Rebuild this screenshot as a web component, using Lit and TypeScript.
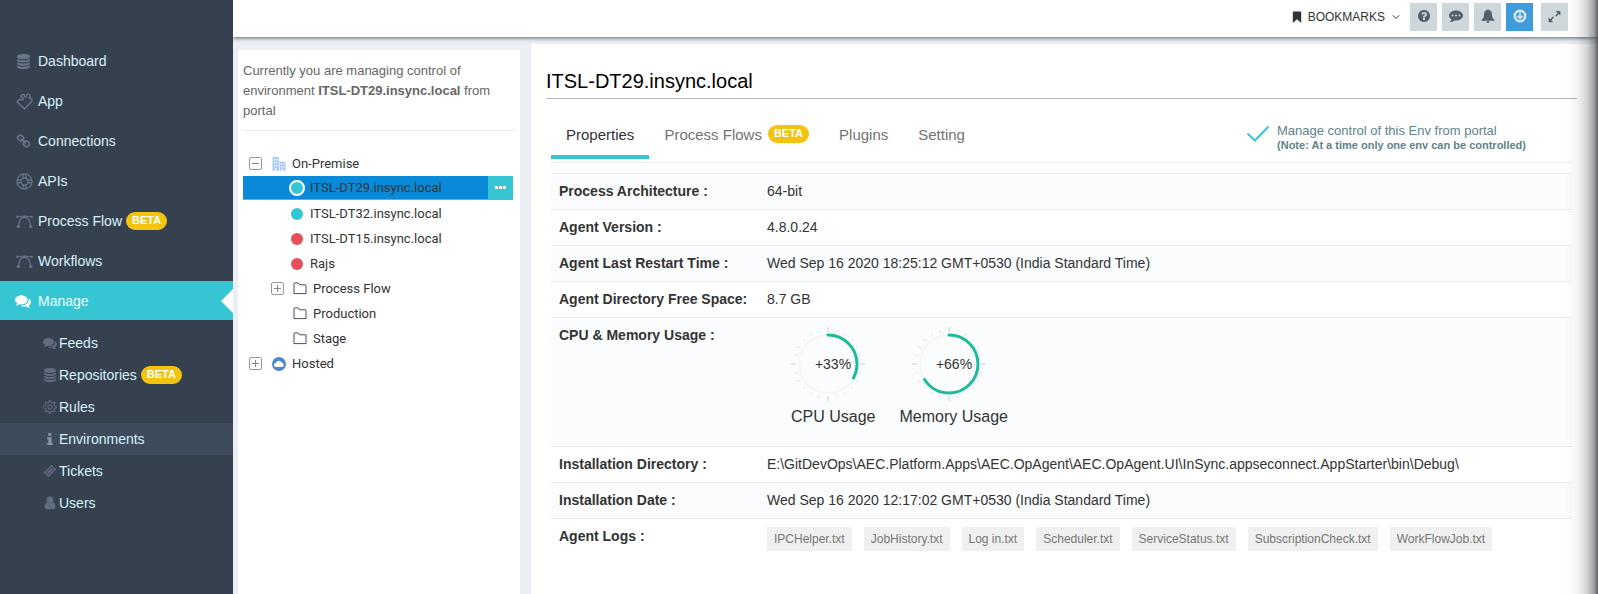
import { LitElement, html, svg, css, nothing } from "lit";
import { customElement, property, state } from "lit/decorators.js";
import { classMap } from "lit/directives/class-map.js";

const DATABASE = svg`<path d="M896 768q237 0 443-43t325-127v170q0 69-103 128t-280 93.500-385 34.500-385-34.500-280-93.500-103-128v-170q119 84 325 127t443 43zm0 768q237 0 443-43t325-127v170q0 69-103 128t-280 93.500-385 34.500-385-34.500-280-93.500-103-128v-170q119 84 325 127t443 43zm0-384q237 0 443-43t325-127v170q0 69-103 128t-280 93.500-385 34.500-385-34.500-280-93.500-103-128v-170q119 84 325 127t443 43zm0-1152q208 0 385 34.500t280 93.500 103 128v128q0 69-103 128t-280 93.500-385 34.500-385-34.500-280-93.500-103-128v-128q0-69 103-128t280-93.500 385-34.500z"/>`;
const COMMENTS = svg`<path d="M1408 768q0 139-94 257t-256.500 186.500-353.500 68.500q-86 0-176-16-124 88-278 128-36 9-86 16h-3q-11 0-20.500-8t-11.500-21q-1-3-1-6.500t.5-6.500 2-6l2.500-5 3.500-5.500 4-5 4.500-5 4-4.500q5-6 23-25t26-29.500 22.500-29 25-38.500 20.500-44q-124-72-195-177t-71-224q0-139 94-257t256.500-186.500 353.500-68.500 353.500 68.500 256.500 186.500 94 257zm384 256q0 120-71 224.500t-195 176.500q10 24 20.500 44t25 38.500 22.500 29 26 29.500 23 25q1 1 4 4.500t4.500 5 4 5 3.500 5.500l2.500 5 2 6 .5 6.500-1 6.500q-3 14-13 22t-22 7q-50-7-86-16-154-40-278-128-90 16-176 16-271 0-472-132 58 4 88 4 161 0 309-45t264-129q125-92 192-212t67-254q0-77-23-152 129 71 204 178t75 230z"/>`;
const CHAIN = svg`<path d="M1520 1216q0-40-28-68l-208-208q-28-28-68-28-42 0-72 32 3 3 19 18.500t21.500 21.500 15 19 13 25.500 3.500 27.500q0 40-28 68t-68 28q-15 0-27.500-3.500t-25.500-13-19-15-21.500-21.500-18.500-19q-33 31-33 73 0 40 28 68l206 207q27 27 68 27 40 0 68-26l147-146q28-28 28-67zm-703-705q0-40-28-68l-206-207q-28-28-68-28-39 0-68 27l-147 146q-28 28-28 67 0 40 28 68l208 208q27 27 68 27 42 0 72-31-3-3-19-18.500t-21.500-21.500-15-19-13-25.500-3.500-27.500q0-40 28-68t68-28q15 0 27.500 3.500t25.500 13 19 15 21.500 21.500 18.500 19q33-31 33-73zm895 705q0 120-85 203l-147 146q-83 83-203 83-121 0-204-85l-206-207q-83-83-83-203 0-123 88-209l-88-88q-86 88-208 88-120 0-204-84l-208-208q-84-84-84-204t85-203l147-146q83-83 203-83 121 0 204 85l206 207q83 83 83 203 0 123-88 209l88 88q86-88 208-88 120 0 204 84l208 208q84 84 84 204z"/>`;
const QUESTION = svg`<path d="M1024 1376v-192q0-14-9-23t-23-9h-192q-14 0-23 9t-9 23v192q0 14 9 23t23 9h192q14 0 23-9t9-23zm256-672q0-88-55.500-163t-138.500-116-170-41q-243 0-371 213-15 24 8 42l132 100q7 6 19 6 16 0 25-12 53-68 86-92 34-24 86-24 48 0 85.500 26t37.500 59q0 38-20 61t-68 45q-63 28-115.500 86.500t-52.500 125.500v36q0 14 9 23t23 9h192q14 0 23-9t9-23q0-19 21.500-49.500t54.500-49.500q32-18 49-28.500t46-35 44.500-48 28-60.500 12.500-81zm384 192q0 209-103 385.500t-279.500 279.500-385.500 103-385.500-103-279.500-279.500-103-385.500 103-385.500 279.500-279.500 385.500-103 385.500 103 279.500 279.500 103 385.500z"/>`;

type Glyph = { box: string; art: unknown };

const line = (art: unknown, weight = 1.3) => svg`<g fill="none" stroke="currentColor" stroke-width=${weight} stroke-linejoin="round" stroke-linecap="round">${art}</g>`;

const GLYPHS: Record<string, Glyph> = {
  database: { box: "0 0 1792 1792", art: DATABASE },
  comments: { box: "0 0 1792 1792", art: COMMENTS },
  chain: { box: "0 0 1792 1792", art: CHAIN },
  question: { box: "0 0 1792 1792", art: QUESTION },
  puzzle: {
    box: "0 0 18 18",
    art: line(svg`<path d="M1 9.200 4.200 6.400C5 8 7.800 7.600 7.600 5.500 7.500 4.200 6.300 3.900 5.600 4.300L5 3.200C6.300 1 8.900 1.200 9.200 3.300 9.500 4.800 10.900 4.600 10.900 3.300 11 1.200 13.300.6 14.500 2 15.400 3.200 14.900 4.800 13.800 5.300 15 5 17 5.700 17 7.500 17 8.600 16.500 9.100 15.900 9.600L9 17Z"/>`, 1.5),
  },
  support: {
    box: "0 0 18 18",
    art: line(svg`<circle cx="9" cy="9" r="8"/><circle cx="9" cy="9" r="3.800"/><path d="M7.500 1.500v4M10.500 1.500v4M7.500 12.500v4M10.500 12.500v4M1.500 7.500h4M1.500 10.500h4M12.500 7.500h4M12.500 10.500h4"/>`),
  },
  vector: {
    box: "0 0 18 18",
    art: svg`${line(svg`<path d="M1 4h16M2.700 14C2.900 8.500 5.400 5 9 4.200c3.600.8 6.100 4.300 6.300 9.800"/>`, 1.2)}<path d="M.3 3h2v2h-2zM15.700 3h2v2h-2zM7.600 2.600h2.800v2.800H7.600zM.8 13h3.200v2.600H.8zM14 13h3.200v2.600H14z"/>`,
  },
  gear: {
    box: "0 0 18 18",
    art: line(svg`<circle cx="9" cy="9" r="2.700"/><path d="M7.500 3.200 7.800 1h2.400l.3 2.200 1.600.7 1.800-1.400 1.600 1.600L14.100 5.900l.7 1.600 2.200.3v2.400l-2.200.3-.7 1.600 1.400 1.800-1.600 1.600-1.800-1.400-1.600.7-.3 2.200H7.800l-.3-2.200-1.600-.7-1.800 1.400-1.600-1.600 1.400-1.800-.7-1.600L1 10.200V7.800l2.200-.3.7-1.600L2.500 4.100l1.600-1.600 1.800 1.400Z"/>`),
  },
  info: { box: "0 0 14 14", art: svg`<path d="M5.200 1h3.200v2.700H5.200zM4.200 5.200h4.300v5.600h1.200V13H4.200v-2.200h1.200V7.300H4.200z"/>` },
  ticket: {
    box: "0 0 14 14",
    art: svg`<path fill-rule="evenodd" d="M8.700.7 10.200 2.200a1.200 1.200 0 0 0 1.600 1.600l1.500 1.500-8 8-1.500-1.500a1.200 1.200 0 0 0-1.600-1.600L.7 8.700ZM8.500 3 3 8.500 5.500 11 11 5.500ZM8.500 4.100 9.900 5.500 5.500 9.900 4.100 8.500Z"/>`,
  },
  user: { box: "0 0 14 14", art: svg`<circle cx="7" cy="4" r="3.400"/><path d="M4.200 6.300a4.200 4.200 0 0 0 5.600 0C11.600 6.700 12.300 8.500 12.300 11c0 1.400-.7 2.200-1.700 2.200H3.400c-1 0-1.700-.8-1.700-2.200 0-2.500.7-4.300 2.500-4.700Z"/>` },
  commenting: {
    box: "0 0 14 14",
    art: svg`<path fill-rule="evenodd" d="M7 1.500c3.800 0 7 2.200 7 5s-3.200 5-7 5c-.6 0-1.200 0-1.700-.1C4 12.500 2.500 13 1 13c.8-.8 1.300-1.600 1.500-2.700C1 9.400 0 8 0 6.500c0-2.800 3.200-5 7-5ZM3.500 5.500a1 1 0 1 0 0 2 1 1 0 0 0 0-2Zm3.500 0a1 1 0 1 0 0 2 1 1 0 0 0 0-2Zm3.500 0a1 1 0 1 0 0 2 1 1 0 0 0 0-2Z"/>`,
  },
  bell: { box: "0 0 14 14", art: svg`<path d="M6.200 1a.8.8 0 0 1 1.600 0C10 1.400 11 3.200 11 5.200c0 3 .9 4.600 2.500 5.800v.8H.500V11C2.100 9.800 3 8.200 3 5.200 3 3.200 4 1.400 6.200 1ZM5.400 12.300h3.200a1.600 1.600 0 0 1-3.200 0Z"/>` },
  down: { box: "0 0 14 14", art: svg`<circle cx="7" cy="7" r="5.300" fill="none" stroke="currentColor" stroke-width="2.200"/><path fill="none" stroke="currentColor" stroke-width="1.500" d="M7 3.200v6M4.200 6.700 7 9.500 9.800 6.700"/>` },
  expand: {
    box: "0 0 14 14",
    art: svg`<path d="M8.300 1h5v5l-1.700-1.700-2.900 2.900-1.100-1.100 2.800-3ZM5.700 13.200H.7v-5l1.700 1.700 2.900-2.900 1.100 1.100-2.800 3Z"/>`,
  },
  bookmark: { box: "0 0 10 12", art: svg`<path d="M.8.500h8.400V12L5 8.200.8 12Z"/>` },
  chevron: { box: "0 0 8 8", art: svg`<path fill="none" stroke="currentColor" d="m.8 2.300 3.200 3.200 3.200-3.200"/>` },
  check: { box: "0 0 24 18", art: svg`<path fill="none" stroke="currentColor" stroke-width="2" d="M1.500 8.500 9 15.500 22.500 1.500"/>` },
  building: {
    box: "0 0 14 14",
    art: svg`<path fill="#a9c8fb" d="M.5 0h6.300v4.800h6.700v9H.500Z"/><path fill="#fff" d="M2 2h1.300v1.500H2zM4.300 2h1.300v1.500H4.300zM2 5h1.300v1.500H2zM4.300 5h1.300v1.500H4.300zM2 8h1.300v1.500H2zM4.300 8h1.300v1.500H4.300zM7 5.500h.8v8.300H7zM8.900 6.500h1.300v1.300H8.900zM11.200 6.500h1.300v1.300h-1.300zM8.900 9.200h1.300v1.300H8.900zM11.200 9.200h1.300v1.300h-1.300zM2.800 11.300h1.700v2.500H2.800zM9.600 11.700h1.700v2.100H9.600z"/>`,
  },
  cloud: { box: "0 0 14 14", art: svg`<circle cx="7" cy="7" r="7" fill="#4e87cb"/><path fill="#fff" d="M4.200 10a2 2 0 0 1-.3-4 3 3 0 0 1 5.600-.4 2.300 2.300 0 0 1 .8 4.400Z"/>` },
  folder: { box: "0 0 14 14", art: svg`<path fill="none" stroke="#4a3a52" d="M.5 12.500v-11q0-.5.500-.5h4.200l1.300 2h6.500q.5 0 .5.500v9Z"/>` },
  plus: { box: "0 0 13 13", art: svg`<rect x=".5" y=".5" width="12" height="12" rx="1.500" fill="none" stroke="#999"/><path stroke="#888" d="M3 6.500h7M6.500 3v7"/>` },
  minus: { box: "0 0 13 13", art: svg`<rect x=".5" y=".5" width="12" height="12" rx="1.500" fill="none" stroke="#999"/><path stroke="#888" d="M3 6.500h7"/>` },
};

const icon = (name: string, width: number, height = width) => svg`
  <svg width=${width} height=${height} viewBox=${GLYPHS[name].box} fill="currentColor" aria-hidden="true">${GLYPHS[name].art}</svg>`;

const reset = css`
  *, *::before, *::after { box-sizing: border-box; }
  svg { display: block; flex: none; }
  ul { list-style: none; margin: 0; padding: 0; }
  button { font: inherit; color: inherit; background: none; border: 0; padding: 0; margin: 0; text-align: left; cursor: pointer; }
  a { color: inherit; text-decoration: none; }
`;

@customElement("beta-badge")
class BetaBadge extends LitElement {
  static styles = css`
    :host {
      display: inline-block; height: 18px; padding: 0 6px; border-radius: 9px;
      background: #f2c40f; color: #fff; font-size: 11px; font-weight: 700; line-height: 17px;
    }
  `;
  render() { return html`BETA`; }
}

@customElement("side-nav")
class SideNav extends LitElement {
  static styles = [reset, css`
    :host { display: block; padding-top: 41px; background: #364150; color: #d8f0fa; font-size: 14px; }
    .link { display: flex; align-items: center; height: 40px; padding-left: 16px; color: #d8f0fa; }
    .glyph { width: 22px; color: #68758a; }
    .label { margin-right: 4px; }
    .active { position: relative; height: 39px; padding-left: 15px; background: #36c6d3; color: #f4fdfe; }
    .active .glyph { width: 23px; color: #fff; }
    .active::after {
      content: ""; position: absolute; right: 0; top: 8px;
      border: 12px solid transparent; border-left: 0; border-right-color: #fff;
    }
    .sub { padding: 7px 0; }
    .child { display: flex; align-items: center; height: 32px; padding-left: 43px; }
    .child .glyph { width: 16px; color: #606c80; }
    .current { background: #3e4b5c; }
    .current .glyph { color: #8a96a8; }
  `];

  private items = [
    ["database", "Dashboard"], ["puzzle", "App"], ["chain", "Connections"],
    ["support", "APIs"], ["vector", "Process Flow", "beta"], ["vector", "Workflows"],
  ];
  private children_ = [
    ["comments", "Feeds"], ["database", "Repositories", "beta"], ["gear", "Rules"],
    ["info", "Environments"], ["ticket", "Tickets"], ["user", "Users"],
  ];

  render() {
    return html`
      <nav aria-label="Main">
        <ul>
          ${this.items.map(([glyph, label, beta]) => html`
            <li><a class="link" href="#">
              <span class="glyph">${icon(glyph, glyph === "database" || glyph === "chain" ? 15 : 17)}</span>
              <span class="label">${label}</span>${beta ? html`<beta-badge></beta-badge>` : nothing}
            </a></li>`)}
          <li>
            <a class="link active" href="#"><span class="glyph">${icon("comments", 16)}</span><span class="label">Manage</span></a>
            <ul class="sub">
              ${this.children_.map(([glyph, label, beta]) => html`
                <li><a class=${classMap({ child: true, current: label === "Environments" })} href="#">
                  <span class="glyph">${icon(glyph, 14)}</span>
                  <span class="label">${label}</span>${beta ? html`<beta-badge></beta-badge>` : nothing}
                </a></li>`)}
            </ul>
          </li>
        </ul>
      </nav>`;
  }
}

@customElement("top-bar")
class TopBar extends LitElement {
  static styles = [reset, css`
    :host {
      display: flex; justify-content: flex-end; align-items: flex-start; gap: 5px;
      height: 37px; padding: 3px 30px 0 0; background: #fff; position: relative;
      box-shadow: 0 1px 4px rgba(50, 55, 60, 0.8);
    }
    .bookmarks { display: flex; align-items: center; height: 28px; margin-right: 5px; font-size: 12px; color: #333; }
    .word { margin: 0 7px 0 6px; }
    .tool { display: grid; place-items: center; width: 27px; height: 28px; padding-bottom: 2px; background: #ced8da; color: #525e6b; }
    .primary { background: #3f9cdc; color: #e6ecf0; }
    .screen { margin-left: 3px; }
  `];
  render() {
    return html`
      <button class="bookmarks">${icon("bookmark", 10, 12)}<span class="word">BOOKMARKS</span>${icon("chevron", 8)}</button>
      <button class="tool" aria-label="Help">${icon("question", 14)}</button>
      <button class="tool" aria-label="Messages">${icon("commenting", 14)}</button>
      <button class="tool" aria-label="Notifications">${icon("bell", 14)}</button>
      <button class="tool primary" aria-label="Downloads">${icon("down", 14)}</button>
      <button class="tool screen" aria-label="Full screen">${icon("expand", 13)}</button>`;
  }
}

@customElement("env-tree")
class EnvTree extends LitElement {
  static styles = [reset, css`
    :host { display: block; background: #fff; padding: 11px 5px 0; }
    .note { margin: 0; padding-bottom: 9px; border-bottom: 1px solid #e9ecef; font-size: 13px; line-height: 20px; color: #666; }
    .tree { padding: 20px 2px 0 0; font-family: Roboto, sans-serif; font-size: 13px; color: #333; }
    .row { display: flex; align-items: center; height: 25px; }
    .toggle { display: grid; place-items: center; width: 24px; height: 25px; }
    .name { display: flex; align-items: center; flex: 1; height: 25px; gap: 6px; }
    .root .name { padding-left: 5px; }
    .leaf { padding-left: 48px; }
    .leaf .name { gap: 7px; }
    .nested { padding-left: 22px; }
    .nested .name { padding-left: 4px; }
    .blank { padding-left: 50px; }
    .dot { width: 12px; height: 12px; border-radius: 50%; }
    .up { background: #36c6d3; }
    .down { background: #e7505a; }
    .selected { height: 24px; margin-bottom: 1px; padding-left: 46px; background: #098ad8; border-bottom: 1px solid #36c6d3; }
    .selected .name { gap: 5px; height: 23px; }
    .selected .dot { width: 16px; height: 16px; border: 2px solid #fff; }
    .more { display: flex; align-items: center; justify-content: center; gap: 1px; width: 25px; height: 24px; background: #36c6d3; }
    .pip { width: 3px; height: 3px; background: #fff; }
  `];

  private toggle(glyph: string, label: string) {
    return html`<button class="toggle" aria-label=${label}>${icon(glyph, 13)}</button>`;
  }
  private server(name: string, status: string) {
    return html`<li class="row leaf"><button class="name"><span class="dot ${status}"></span>${name}</button></li>`;
  }

  render() {
    return html`
      <p class="note">Currently you are managing control of environment <b>ITSL-DT29.insync.local</b> from portal</p>
      <ul class="tree">
        <li class="row root">${this.toggle("minus", "Collapse On-Premise")}<button class="name">${icon("building", 14)}On-Premise</button></li>
        <li class="row leaf selected">
          <button class="name"><span class="dot up"></span>ITSL-DT29.insync.local</button>
          <button class="more" aria-label="More actions"><span class="pip"></span><span class="pip"></span><span class="pip"></span></button>
        </li>
        ${this.server("ITSL-DT32.insync.local", "up")}
        ${this.server("ITSL-DT15.insync.local", "down")}
        ${this.server("Rajs", "down")}
        <li class="row nested">${this.toggle("plus", "Expand Process Flow")}<button class="name">${icon("folder", 14, 13)}Process Flow</button></li>
        <li class="row blank"><button class="name">${icon("folder", 14, 13)}Production</button></li>
        <li class="row blank"><button class="name">${icon("folder", 14, 13)}Stage</button></li>
        <li class="row root">${this.toggle("plus", "Expand Hosted")}<button class="name">${icon("cloud", 14)}Hosted</button></li>
      </ul>`;
  }
}

@customElement("usage-gauge")
class UsageGauge extends LitElement {
  @property({ type: Number }) value = 0;
  @property() caption = "";

  static styles = [reset, css`
    :host { display: flex; flex-direction: column; align-items: center; color: #333; }
    .value { font-size: 14px; fill: #333; }
    .caption { margin-top: 6px; font-size: 16px; line-height: 20px; }
  `];

  render() {
    const ticks = Array.from({ length: 24 }, (_, i) => i * 15);
    return html`
      <svg width="84" height="74" viewBox="-42 -37 84 74" role="img" aria-label="${this.caption} ${this.value}%">
        <g transform="translate(-5 0)" fill="none">
          ${ticks.map((angle) => svg`<path stroke="#e4e5e7" stroke-width=${angle % 90 ? 1 : 2}
            d=${angle % 90 ? "M0-35v3" : "M0-37v5"} transform="rotate(${angle})"/>`)}
          <circle r="29" stroke="#f7f7f7" stroke-width="2.500"/>
          <circle r="29" stroke="#1bbc9b" stroke-width="3" stroke-linecap="round" pathLength="100"
            stroke-dasharray="${this.value} 100" transform="rotate(-90)"/>
        </g>
        <text class="value" x="0" y="5" text-anchor="middle">+${this.value}%</text>
      </svg>
      <span class="caption">${this.caption}</span>`;
  }
}

@customElement("env-details")
class EnvDetails extends LitElement {
  @state() private tab = "Properties";

  static styles = [reset, css`
    :host { display: block; background: #fff; padding: 23px 21px 0 15px; }
    .title { margin: 0; padding-bottom: 3px; border-bottom: 1px solid #b5b5b5; font-size: 20px; font-weight: 400; line-height: 28px; color: #000; }
    .body { margin: 0 5px; }
    .bar { display: flex; align-items: flex-start; height: 64px; padding-top: 14px; border-bottom: 1px solid #eceff3; }
    .tabs { display: flex; flex: 1; }
    .tab { display: flex; align-items: center; gap: 6px; height: 46px; padding: 0 15px; border-bottom: 4px solid transparent; font-size: 15px; color: #737373; white-space: nowrap; }
    .on { border-bottom-color: #36c6d3; color: #333; }
    .control { display: flex; gap: 7px; margin-right: 46px; padding-top: 9px; color: #5f8289; font-size: 13px; line-height: 17px; }
    .check { color: #36c6d3; padding-top: 3px; }
    .small { display: block; font-size: 11px; line-height: 12px; }
    .props { width: 100%; margin-top: 10px; border-spacing: 0; font-size: 14px; line-height: 20px; color: #333; }
    .props th, .props td { padding: 7px 8px 8px; border-top: 1px solid #e7ecf1; text-align: left; vertical-align: top; }
    .props th { width: 208px; }
    .props tr:nth-child(odd) { background: #fbfcfd; }
    .gauges { display: flex; gap: 24px; padding: 2px 24px 11px; }
    .logs { display: flex; flex-wrap: wrap; gap: 12px; padding-top: 1px; }
    .log { height: 24px; padding: 0 7px; background: #f0f0f0; color: #777; font-size: 12px; }
  `];

  private tabs = ["Properties", "Process Flows", "Plugins", "Setting"];
  private logs = ["IPCHelper.txt", "JobHistory.txt", "Log in.txt", "Scheduler.txt", "ServiceStatus.txt", "SubscriptionCheck.txt", "WorkFlowJob.txt"];

  render() {
    const rows: [string, unknown][] = [
      ["Process Architecture :", "64-bit"],
      ["Agent Version :", "4.8.0.24"],
      ["Agent Last Restart Time :", "Wed Sep 16 2020 18:25:12 GMT+0530 (India Standard Time)"],
      ["Agent Directory Free Space:", "8.7 GB"],
      ["CPU & Memory Usage :", html`<div class="gauges">
        <usage-gauge .value=${33} caption="CPU Usage"></usage-gauge>
        <usage-gauge .value=${66} caption="Memory Usage"></usage-gauge></div>`],
      ["Installation Directory :", "E:\\GitDevOps\\AEC.Platform.Apps\\AEC.OpAgent\\AEC.OpAgent.UI\\InSync.appseconnect.AppStarter\\bin\\Debug\\"],
      ["Installation Date :", "Wed Sep 16 2020 12:17:02 GMT+0530 (India Standard Time)"],
      ["Agent Logs :", html`<div class="logs">${this.logs.map((log) => html`<button class="log">${log}</button>`)}</div>`],
    ];
    return html`
      <h1 class="title">ITSL-DT29.insync.local</h1>
      <div class="body">
        <div class="bar">
          <div class="tabs" role="tablist">
            ${this.tabs.map((name) => html`
              <button role="tab" aria-selected=${name === this.tab} class=${classMap({ tab: true, on: name === this.tab })}
                @click=${() => (this.tab = name)}>${name}${name === "Process Flows" ? html`<beta-badge></beta-badge>` : nothing}</button>`)}
          </div>
          <div class="control">
            <span class="check">${icon("check", 24, 18)}</span>
            <span>Manage control of this Env from portal<b class="small">(Note: At a time only one env can be controlled)</b></span>
          </div>
        </div>
        <table class="props">
          <tbody>${rows.map(([name, value]) => html`<tr><th scope="row">${name}</th><td>${value}</td></tr>`)}</tbody>
        </table>
      </div>`;
  }
}

@customElement("app-root")
class AppRoot extends LitElement {
  static styles = [reset, css`
    :host {
      display: grid; grid-template-columns: 233px minmax(0, 1fr); position: relative; min-height: 100vh;
      font-family: "Liberation Sans", Arial, sans-serif; background: #ebeff3;
    }
    .nav { position: relative; z-index: 1; }
    .main { display: flex; flex-direction: column; min-width: 0; }
    .content { display: flex; flex: 1; gap: 11px; padding: 7px 0 0 5px; }
    .tree { width: 282px; flex: none; margin-top: 6px; }
    .details { flex: 1; min-width: 0; }
    .edge {
      position: absolute; top: 0; right: 0; bottom: 0; width: 32px; pointer-events: none;
      background: linear-gradient(to right, rgba(60,64,68,0), rgba(60,64,68,.06) 35%, rgba(60,64,68,.22) 65%, rgba(60,64,68,.5) 88%, rgba(60,64,68,.85));
    }
  `];
  render() {
    return html`
      <side-nav class="nav"></side-nav>
      <div class="main">
        <top-bar></top-bar>
        <div class="content">
          <env-tree class="tree"></env-tree>
          <env-details class="details"></env-details>
        </div>
      </div>
      <div class="edge"></div>`;
  }
}
